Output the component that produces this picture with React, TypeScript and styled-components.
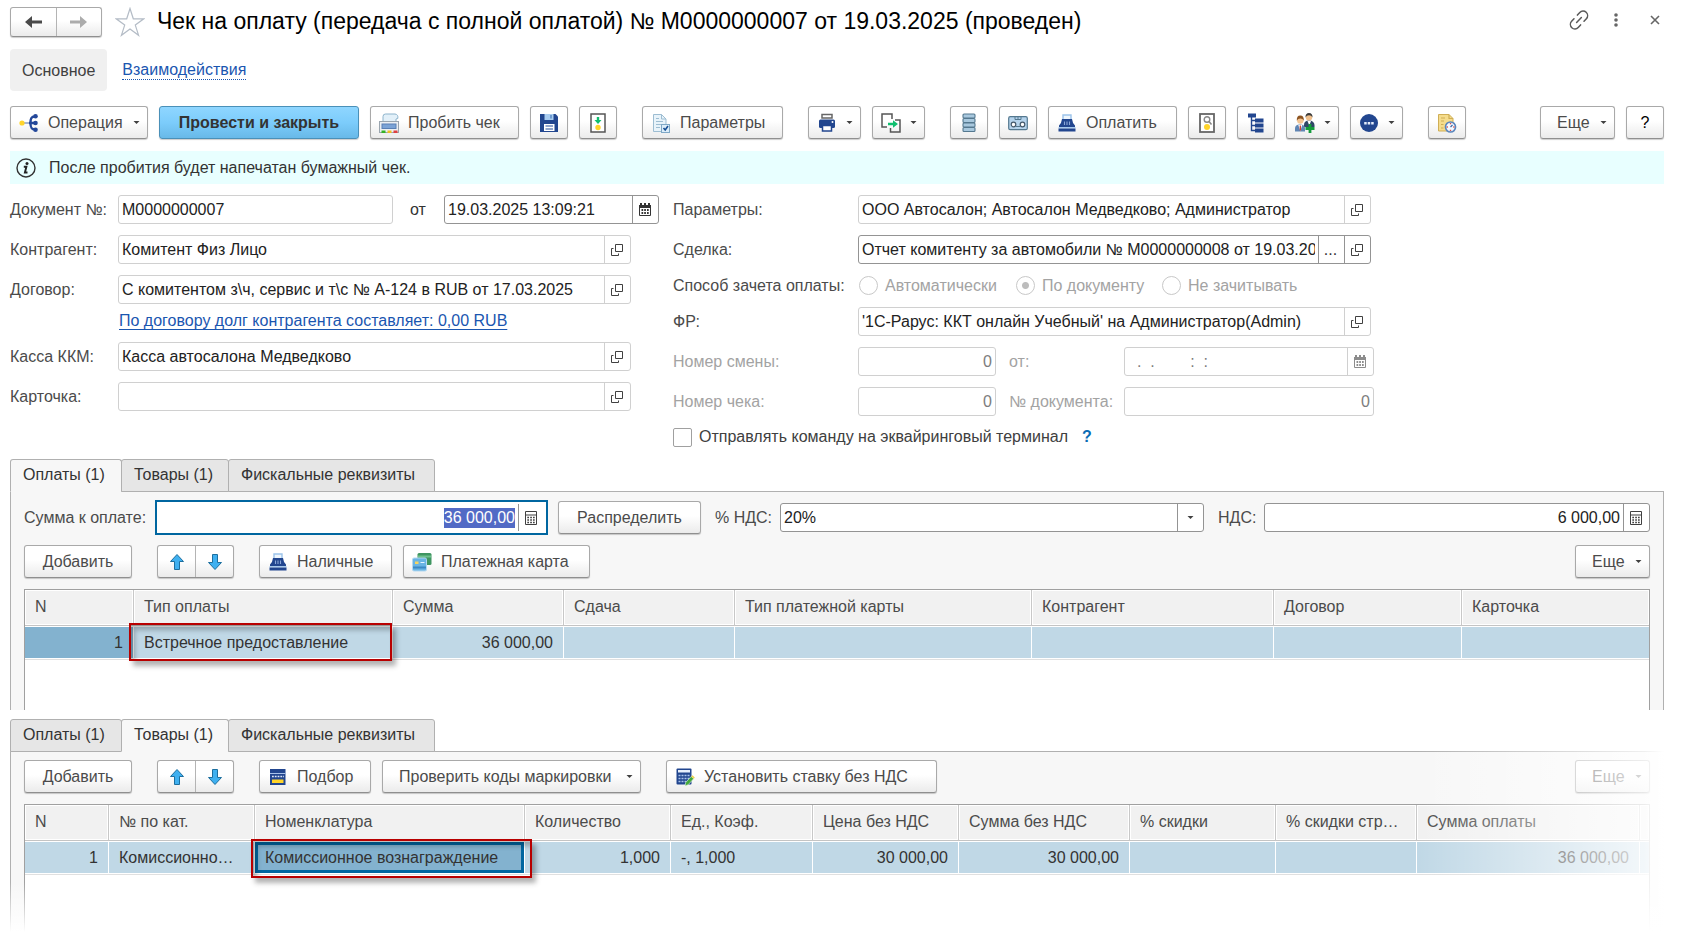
import React, { useEffect, useRef } from "react";
import styled, { createGlobalStyle, css } from "styled-components";

const GlobalStyle = createGlobalStyle`
  *, *::before, *::after { box-sizing: border-box; }
  body { margin: 0; background: #fff; }
  body, button, input, select, table { font: 16px/20px "Liberation Sans", Arial, sans-serif; color: #4b4b4b; }
`;

const Page = styled.div`
  display: flex;
  flex-direction: column;
  padding: 6px 17px 0 10px;
`;

/* ---------- title bar ---------- */

const TitleBar = styled.header`
  display: flex;
  align-items: center;
  height: 31px;
`;

const Title = styled.h1`
  flex: 1;
  margin: 0 0 0 12px;
  padding-bottom: 2px;
  font-size: 23px;
  line-height: 28px;
  font-weight: 400;
  color: #000;
  white-space: nowrap;
`;

const PlainButton = styled.button`
  display: flex;
  align-items: center;
  justify-content: center;
  padding: 0;
  border: 0;
  background: none;
`;

const FavoriteButton = styled(PlainButton)`
  margin-left: 13px;
`;

const WindowTools = styled.div`
  display: flex;
  align-items: center;
  gap: 18px;
  padding-bottom: 3px;
`;

const Sections = styled.nav`
  display: flex;
  align-items: center;
  gap: 15px;
  margin-top: 12px;
`;

const SectionCurrent = styled.a`
  padding: 12px 12px 10px;
  border-radius: 4px;
  background: #f0f0f0;
  color: #404040;
  text-decoration: none;
`;

const SectionLink = styled.a`
  line-height: 18px;
  color: #1a56b0;
  text-decoration: none;
  border-bottom: 1px dotted #1a56b0;
`;

/* ---------- buttons ---------- */

const raised = css`
  border: 1px solid #a9a9a9;
  border-bottom-color: #8f8f8f;
  border-radius: 3px;
  background: linear-gradient(#fff 0%, #fff 45%, #ebebeb 100%);
  box-shadow: 0 1px 1px rgba(0, 0, 0, 0.2);
`;

const ToolButton = styled.button<{ $w?: number; $icon?: boolean; $caret?: boolean; $primary?: boolean }>`
  ${raised}
  flex: none;
  display: flex;
  align-items: center;
  justify-content: ${(p) => (p.$icon || p.$caret ? "flex-start" : "center")};
  gap: 9px;
  height: 33px;
  min-width: ${(p) => p.$w ?? 0}px;
  padding: 0 ${(p) => (p.$caret ? 7 : 16)}px 0 ${(p) => (p.$icon ? 8 : 16)}px;
  white-space: nowrap;
  ${(p) =>
    p.$primary &&
    css`
      border-color: #4a90b8;
      background: linear-gradient(#8fd6ff 0%, #7cccfb 50%, #68b9e8 100%);
      color: #333;
      font-weight: 700;
    `}
`;

const CaretSvg = styled.svg`
  margin-left: auto;
`;

const IconButton = styled.button`
  ${raised}
  flex: none;
  display: flex;
  align-items: center;
  justify-content: center;
  width: 38px;
  height: 33px;
  padding: 0;
  color: #000;
`;

const Split = styled.div`
  ${raised}
  display: flex;
  height: 33px;
`;

const SplitPart = styled(PlainButton)`
  width: 37px;
  & + & {
    width: 38px;
    border-left: 1px solid #b4b4b4;
  }
`;

const NavSplit = styled(Split)`
  height: 30px;
  ${SplitPart} { width: 45px; }
`;

const Toolbar = styled.div`
  display: flex;
  align-items: center;
  gap: 11px;
`;

const MainToolbar = styled(Toolbar)`
  margin-top: 15px;
`;

const Gap = styled.span<{ $grow?: boolean }>`
  flex: ${(p) => (p.$grow ? "1 0 0" : "0 0 3px")};
`;

const InfoBar = styled.div`
  display: flex;
  align-items: center;
  gap: 13px;
  height: 33px;
  margin-top: 12px;
  padding-left: 6px;
  background: #e8ffff;
  color: #333;
`;

/* ---------- form ---------- */

const Form = styled.form`
  display: grid;
  grid-template-columns: minmax(0, 649px) minmax(0, 702px);
  gap: 14px;
  margin-top: 11px;
`;

const Column = styled.div`
  display: flex;
  flex-direction: column;
  gap: 11px;
`;

const Row = styled.div<{ $wide?: boolean }>`
  display: grid;
  grid-template-columns: ${(p) => (p.$wide ? 185 : 108)}px minmax(0, 1fr);
  align-items: center;
`;

const RowBody = styled.div`
  display: flex;
  align-items: center;
`;

const Label = styled.label<{ $off?: boolean }>`
  color: ${(p) => (p.$off ? "#a3a3a3" : "#4b4b4b")};
  white-space: nowrap;
`;

const FromLabel = styled(Label)`
  width: 51px;
  padding-left: 17px;
  color: #333;
`;

const InnerLabel = styled(Label)`
  width: 128px;
  padding-left: 13px;
`;

const Field = styled.div<{ $w?: number; $strong?: boolean }>`
  display: flex;
  flex: ${(p) => (p.$w ? `0 1 ${p.$w}px` : "1 1 0")};
  min-width: 0;
  width: ${(p) => (p.$w ? `${p.$w}px` : "auto")};
  height: 29px;
  border: 1px solid ${(p) => (p.$strong ? "#949494" : "#d0d0d0")};
  border-radius: 3px;
  background: #fff;
`;

const FieldInput = styled.input<{ $right?: boolean }>`
  flex: 1;
  min-width: 0;
  padding: 0 3px;
  border: 0;
  outline: 0;
  background: none;
  color: #222;
  text-align: ${(p) => (p.$right ? "right" : "left")};
  &:disabled { color: #7d7d7d; }
`;

const FieldButton = styled(PlainButton)<{ $strong?: boolean }>`
  flex: none;
  width: 26px;
  padding-right: 2px;
  border-left: 1px solid ${(p) => (p.$strong ? "#949494" : "#d0d0d0")};
  color: #333;
  &:disabled { color: #8c8c8c; }
`;

const FocusField = styled(Field)`
  height: 35px;
  padding: 2px 2px 2px 0;
  border: 2px solid #0066a0;
  border-radius: 0;
  ${FieldInput}::selection {
    background: rgba(80, 104, 196, 0.99);
    color: #fff;
  }
`;

const VatSelect = styled.select`
  flex: 1;
  min-width: 0;
  padding: 0 3px;
  border: 0;
  background: none;
  appearance: none;
  color: #222;
`;

const SelectArrow = styled.span`
  display: flex;
  align-items: center;
  width: 26px;
  padding-right: 9px;
  border-left: 1px solid #949494;
  pointer-events: none;
`;

const DebtLink = styled.a`
  display: block;
  margin: 6px 0 0 109px;
  line-height: 21px;
  color: #1a56b0;
  text-underline-offset: 3px;
`;

const Radios = styled.div`
  display: grid;
  grid-template-columns: 157px 146px auto;
  align-items: center;
  height: 21px;
  padding-left: 1px;
`;

const Choice = styled.label<{ $off?: boolean }>`
  display: flex;
  align-items: center;
  gap: 7px;
  color: ${(p) => (p.$off ? "#a3a3a3" : "#404040")};
  white-space: nowrap;
`;

const Radio = styled.input`
  appearance: none;
  width: 19px;
  height: 19px;
  margin: 0;
  border: 1px solid #c8c8c8;
  border-radius: 50%;
  background: #fff;
  &:checked { background: radial-gradient(circle, #bdbdbd 0 3px, #fff 4px); }
`;

const Check = styled.input`
  appearance: none;
  width: 19px;
  height: 19px;
  margin: 0;
  border: 1px solid #a0a0a0;
  border-radius: 2px;
  background: #fff;
`;

const HelpLink = styled.a`
  margin-left: 14px;
  color: #0a6cb4;
  font-weight: 700;
  text-decoration: none;
`;

/* ---------- tabs and panels ---------- */

const TabSet = styled.section`
  position: relative;
  margin-top: 9px;
`;

const FirstTabSet = styled(TabSet)`
  margin-top: 12px;
`;

const Tabs = styled.div`
  display: flex;
`;

const Tab = styled.button<{ $w: number; $on?: boolean }>`
  position: relative;
  height: 33px;
  min-width: ${(p) => p.$w}px;
  margin-bottom: -1px;
  padding: 0 12px 1px;
  border: 1px solid #b0b0b0;
  border-bottom-color: ${(p) => (p.$on ? "#f7f7f7" : "#b0b0b0")};
  border-radius: 3px 3px 0 0;
  background: ${(p) => (p.$on ? "#f7f7f7" : "#e6e6e6")};
  color: #333;
  text-align: left;
  white-space: nowrap;
  & + & { margin-left: -1px; }
`;

const Panel = styled.div`
  display: flex;
  flex-direction: column;
  padding: 8px 13px 0;
  border: 1px solid #b0b0b0;
  border-bottom: 0;
  background: #f7f7f7;
`;

const PayRow = styled.div`
  display: flex;
  align-items: center;
  margin-bottom: 10px;
`;

const PayLabel = styled(Label)<{ $w: number; $pad?: number }>`
  flex: none;
  width: ${(p) => p.$w}px;
  padding-left: ${(p) => p.$pad ?? 0}px;
`;

const PayButton = styled(ToolButton)`
  margin-left: 10px;
`;

const Sheet = styled.div`
  height: 121px;
  margin-top: 11px;
  border: 1px solid #a0a0a0;
  border-bottom: 0;
  background: #fff;
`;

const TallSheet = styled(Sheet)`
  height: 128px;
`;

const Grid = styled.table`
  width: 100%;
  table-layout: fixed;
  border-spacing: 0;
`;

const Th = styled.th`
  height: 36px;
  padding: 0 10px 2px;
  border-right: 1px solid #c8c8c8;
  border-bottom: 1px solid #c4c4c4;
  background: #f1f1f1;
  box-shadow: inset 0 0 0 1px #fff;
  font-weight: 400;
  text-align: left;
  white-space: nowrap;
  &:last-child { border-right: 0; }
`;

const Td = styled.td<{ $right?: boolean; $dark?: boolean; $edit?: boolean }>`
  position: relative;
  height: 33px;
  padding: 0 10px;
  border: 1px solid #fff;
  border-left: 0;
  background: ${(p) => (p.$dark || p.$edit ? "#83b2cf" : "#c0d8e6")};
  box-shadow: 0 1px #e0e0e0${(p) => (p.$edit ? ", inset 0 0 0 3px #0066a0" : "")};
  color: #333;
  text-align: ${(p) => (p.$right ? "right" : "left")};
  white-space: nowrap;
  &:last-child { border-right: 0; }
`;

const Callout = styled.span<{ $loose?: boolean }>`
  position: absolute;
  z-index: 1;
  inset: ${(p) => (p.$loose ? "-3px -8px -5px -4px" : "-4px 0 -3px -5px")};
  border: 2px solid #b80000;
  box-shadow: 4px 5px 5px rgba(0, 0, 0, 0.3), inset 4px 5px 5px rgba(0, 0, 0, 0.25);
  pointer-events: none;
`;

const FadeRight = styled.div`
  position: absolute;
  z-index: 2;
  inset: 0 0 0 auto;
  width: 247px;
  background: linear-gradient(to right, rgba(255, 255, 255, 0), rgba(255, 255, 255, 0.8) 92%, #fff);
  pointer-events: none;
`;

const FadeBottom = styled.div`
  position: absolute;
  z-index: 2;
  inset: auto 0 0 0;
  height: 50px;
  background: linear-gradient(rgba(255, 255, 255, 0), #fff);
  pointer-events: none;
`;

/* ---------- icons ---------- */

type SvgProps = { w?: number; h?: number; children: React.ReactNode };
const Svg = ({ w = 20, h = 20, children }: SvgProps) => (
  <svg width={w} height={h} viewBox={`0 0 ${w} ${h}`} fill="none" aria-hidden="true">
    {children}
  </svg>
);

const Caret = () => (
  <CaretSvg width={7} height={5} viewBox="0 0 7 5" aria-hidden="true">
    <path d="M.5 1h6L3.500 4z" fill="#404040" />
  </CaretSvg>
);

const BackIcon = () => (
  <Svg w={18} h={12}>
    <path d="M0 6l7-6v4.500h10v3H7V12z" fill="#4a4a4a" />
  </Svg>
);
const ForwardIcon = () => (
  <Svg w={18} h={12}>
    <path d="M17 6l-7-6v4.500H0v3h10V12z" fill="#acacac" />
  </Svg>
);
const StarIcon = () => (
  <Svg w={30} h={30}>
    <path d="M15 1.500l3.300 10.300h10.500l-8.500 6.300 3.300 10.200L15 22l-8.600 6.300 3.300-10.200-8.500-6.300h10.500z" stroke="#b4bcc6" strokeWidth="1.200" />
  </Svg>
);
const ChainIcon = () => (
  <Svg w={22} h={22}>
    <g transform="rotate(-47 11 11)" stroke="#5a5a5a" strokeWidth="1.500" strokeLinecap="round">
      <path d="M8.500 15.500H5a4.500 4.500 0 0 1 0-9h3.500M13.500 6.500H17a4.500 4.500 0 0 1 0 9h-3.500M7.500 11h7" />
    </g>
  </Svg>
);
const DotsIcon = () => (
  <Svg w={16} h={16}>
    <circle cx="8" cy="3" r="1.800" fill="#666" />
    <circle cx="8" cy="8" r="1.800" fill="#666" />
    <circle cx="8" cy="13" r="1.800" fill="#666" />
  </Svg>
);
const CloseIcon = () => (
  <Svg w={22} h={10}>
    <path d="M9 1l8 8M17 1L9 9" stroke="#666" strokeWidth="1.600" />
  </Svg>
);
const InfoIcon = () => (
  <Svg w={20} h={20}>
    <circle cx="10" cy="10" r="9" stroke="#333" strokeWidth="1.400" />
    <circle cx="11" cy="5.500" r="1.500" fill="#222" />
    <path d="M7.800 8.800h2.600l-1.500 5.700h2.600" stroke="#222" strokeWidth="1.900" />
  </Svg>
);
const OperationIcon = () => (
  <Svg>
    <path d="M4 10h6" stroke="#8a9cc0" strokeWidth="1.500" />
    <path d="M16 3.500c-4 0-4.500 2.500-4.500 6.500s.5 6.500 4.500 6.500M10 10h6" stroke="#24489a" strokeWidth="2.400" />
    <circle cx="3" cy="10" r="2.600" fill="#ffd42a" />
    <circle cx="16.500" cy="3.200" r="2.300" fill="#24489a" />
    <circle cx="16.500" cy="10" r="2.300" fill="#24489a" />
    <circle cx="16.500" cy="16.800" r="2.300" fill="#24489a" />
  </Svg>
);
const FiscalIcon = () => (
  <Svg>
    <path d="M4 9V3.500Q4 1 6.500 1H16q3.500.5 2.800 4.500l-1.800.5v3z" fill="#e2f0f9" stroke="#8db3cc" />
    <rect x="0.500" y="8.500" width="19" height="11" fill="#eceff2" stroke="#9aa5af" />
    <rect x="3" y="11" width="14" height="4.500" fill="#7ba3d6" stroke="#5a80b5" />
    <rect x="2.500" y="17.500" width="4" height="2.500" fill="#35b324" />
    <rect x="8.500" y="17.500" width="4" height="2.500" fill="#f0c020" />
    <rect x="14.500" y="17.500" width="4" height="2.500" fill="#e04040" />
  </Svg>
);
const SaveIcon = () => (
  <Svg>
    <path d="M1 1h15.500L19 3.500V19H1z" fill="#22468f" />
    <rect x="5.500" y="1" width="9" height="6" fill="#a9cdf0" />
    <rect x="11" y="2" width="2" height="3.500" fill="#6f9bd0" />
    <rect x="5" y="11" width="10.500" height="7" fill="#fff" />
    <path d="M6.500 13h7.500M6.500 16h7.500" stroke="#6c88bd" strokeWidth="1.300" />
  </Svg>
);
const PostIcon = () => (
  <Svg>
    <rect x="3" y="1" width="14" height="18" fill="#fff" stroke="#555" strokeWidth="1.500" />
    <path d="M8.800 4h2.400v3h2.300L10 11 6.500 7h2.300z" fill="#0fbf6f" />
    <circle cx="10" cy="14.500" r="2.700" fill="#ffd42a" />
  </Svg>
);
const ParamsIcon = () => (
  <Svg>
    <path d="M2.500 1.500h8l4.500 4.500v12.500h-12.500z" fill="#e8f3fa" stroke="#9dbdd2" />
    <path d="M10.500 1.500v4.500h4.500M5 8.500h7M5 11.500h5M5 14.500h4M5 5.500h3" stroke="#9dbdd2" />
    <rect x="10.500" y="11.500" width="8" height="8" fill="#dcedf9" stroke="#7fa8c6" />
    <path d="M12.500 15l1.700 2 2.800-4" stroke="#174f94" strokeWidth="1.600" />
  </Svg>
);
const PrinterIcon = () => (
  <Svg>
    <path d="M5 5V1.500h10V5z" fill="#fff" stroke="#666" strokeWidth="1.500" />
    <rect x="2" y="6.500" width="16" height="8.500" rx="1.500" fill="#22468f" />
    <circle cx="15.500" cy="9" r="1" fill="#fff" />
    <rect x="5.500" y="12.500" width="9" height="5.500" fill="#fff" stroke="#22468f" strokeWidth="1.500" />
  </Svg>
);
const BasedOnIcon = () => (
  <Svg>
    <path d="M6 14H1V1h10v5" stroke="#555" strokeWidth="1.500" />
    <path d="M9.500 15v4H19V7h-5" stroke="#555" strokeWidth="1.500" />
    <path d="M7 9.700h5V7.200l5 3.800-5 3.800v-2.500H7z" fill="#0fbf6f" />
  </Svg>
);
const RegisterIcon = () => (
  <Svg>
    {[1, 5.500, 10, 14.500].map((y) => (
      <rect key={y} x="4" y={y} width="12" height="4" rx="1" fill="#a8c8de" stroke="#54788f" strokeWidth="1.100" />
    ))}
  </Svg>
);
const CassetteIcon = () => (
  <Svg>
    <rect x="0.700" y="3.700" width="18.600" height="13" rx="1.500" fill="#b5d3ec" stroke="#54788f" strokeWidth="1.200" />
    <path d="M7 4v2.500h6V4M10 4v2" stroke="#54788f" />
    <circle cx="5.500" cy="11.500" r="2.300" fill="#fff" stroke="#44586a" strokeWidth="1.200" />
    <circle cx="14.500" cy="11.500" r="2.300" fill="#fff" stroke="#44586a" strokeWidth="1.200" />
    <path d="M8 13.500h4" stroke="#54788f" />
  </Svg>
);
const CashIcon = () => (
  <Svg>
    <path d="M6 6V2h8v4" fill="#eef6fd" stroke="#9cc3ea" strokeWidth="1.400" />
    <path d="M5 6h10q.5 4.500 3 6.500v2H2v-2Q4.500 10.500 5 6z" fill="#22468f" />
    <path d="M7.500 8.500V12M10 8.500V12M12.500 8.500V12" stroke="#8ba7d8" strokeWidth="1.100" />
    <rect x="1.500" y="14" width="17" height="1.500" fill="#a8cbee" />
    <rect x="1.500" y="15.500" width="17" height="3" fill="#22468f" />
  </Svg>
);
const PreviewIcon = () => (
  <Svg>
    <rect x="3" y="1" width="14" height="18" fill="#fff" stroke="#666" strokeWidth="1.800" />
    <circle cx="10" cy="6.500" r="2.800" stroke="#888" strokeWidth="1.400" />
    <path d="M12 8.500l2.500 3" stroke="#888" strokeWidth="1.500" />
    <circle cx="10" cy="14" r="3" fill="#ffd42a" />
  </Svg>
);
const TreeIcon = () => (
  <Svg>
    <path d="M5.500 3v14.500H10M5.500 7.500H10M5.500 12.500H10" stroke="#22468f" strokeWidth="1.400" />
    <rect x="2" y="0.500" width="8" height="4" fill="#22468f" />
    <rect x="9" y="5.500" width="8.500" height="4" fill="#22468f" />
    <rect x="9" y="10.500" width="8.500" height="4" fill="#22468f" />
    <rect x="9" y="15.500" width="8.500" height="4" fill="#22468f" />
  </Svg>
);
const PeopleIcon = () => (
  <Svg>
    <path d="M9 14v-2q0-4.500 5-4.500t5.500 4.500v2z" fill="#2f4667" />
    <path d="M12.500 8h3.500l-1.700 4.500z" fill="#fff" />
    <circle cx="14" cy="4.200" r="3.200" fill="#f0c08c" />
    <path d="M10.500 4.500Q10.300 0 14 0t3.500 4.500Q16.500 2.300 14 2.300T10.500 4.500z" fill="#3b3b3b" />
    <path d="M0 18.500v-3q0-4 5-4t5 4v3z" fill="#5f86b4" />
    <path d="M3.300 12h4L5.300 18z" fill="#fff" />
    <path d="M5.300 12.500v5" stroke="#cf3a2a" strokeWidth="1.300" />
    <circle cx="5.300" cy="7.500" r="3.200" fill="#f2c493" />
    <path d="M1.800 7.800Q1.500 2.500 5.300 2.500t3.500 5.300Q7.800 5.500 5.300 5.500T1.800 7.800z" fill="#8d5420" />
    <path d="M15 11v9M10.500 15.500h9" stroke="#149c3c" strokeWidth="2.800" />
  </Svg>
);
const MoreIcon = () => (
  <Svg>
    <circle cx="10" cy="10" r="9" fill="#22468f" />
    <path d="M5.200 9h2.500v2.500H5.200zM8.700 9h2.500v2.500H8.700zM12.200 9h2.500v2.500h-2.500z" fill="#e6eefb" />
  </Svg>
);
const HistoryIcon = () => (
  <Svg>
    <path d="M1.500 1.500h10.500l4 4v12.500H1.500z" fill="#f5dc8c" stroke="#cfae55" />
    <path d="M12 1.500v4h4M4 8h3M4 11.500h2.500M4 15h2.500M4 5h4" stroke="#cfae55" strokeWidth="1.200" />
    <circle cx="13.500" cy="14" r="5" fill="#f4f9ff" stroke="#5b86bd" strokeWidth="1.700" />
    <path d="M13.500 14l2-2" stroke="#3e6aa5" strokeWidth="1.200" />
    <path d="M13.500 10v1.300M13.500 16.700V18M9.600 14h1.300M16.200 14h1.300" stroke="#d65050" strokeWidth="1.400" />
  </Svg>
);
const OpenIcon = () => (
  <Svg w={12} h={12}>
    <path d="M4.500 0.500h7v7h-7z" stroke="#404040" />
    <path d="M2.500 4.500h-2v7h7v-2" stroke="#404040" />
  </Svg>
);
const CalendarIcon = () => (
  <Svg w={12} h={13}>
    <path d="M0 2h1V0h2v2h2V0h2v2h2V0h2v2h1v3H0z" fill="currentColor" />
    <path d="M.5 4v8.500h11V4" stroke="currentColor" />
    <path d="M2.500 7h1.700M5.200 7h1.700M8 7h1.700M2.500 10h1.700M5.200 10h1.700M8 10h1.700" stroke="currentColor" strokeWidth="1.800" />
  </Svg>
);
const CalcIcon = () => (
  <Svg w={12} h={14}>
    <path d="M.5.500h11v13H.5zM.5 4h11" stroke="#404040" />
    <path d="M2.300 6.500h1.700M5.200 6.500h1.700M8 6.500h1.700M2.300 9h1.700M5.200 9h1.700M8 9h1.700M2.300 11.500h1.700M5.200 11.500h1.700M8 11.500h1.700" stroke="#404040" strokeWidth="1.400" />
  </Svg>
);
const UpIcon = () => (
  <Svg w={16} h={18}>
    <path d="M8 1.500l6.500 7h-4v8h-5v-8h-4z" fill="#3fb0f0" stroke="#1d6f9f" strokeLinejoin="round" />
  </Svg>
);
const DownIcon = () => (
  <Svg w={16} h={18}>
    <path d="M8 16.500l6.500-7h-4v-8h-5v8h-4z" fill="#3fb0f0" stroke="#1d6f9f" strokeLinejoin="round" />
  </Svg>
);
const CardIcon = () => (
  <Svg>
    <rect x="5.500" y="1" width="14" height="12" rx="1.500" fill="#3f9561" />
    <path d="M6 4.500h13" stroke="#6fc08e" strokeWidth="2" />
    <rect x="0.500" y="6" width="14" height="13" rx="1.500" fill="#69b4e4" stroke="#b4d8f0" />
    <path d="M1 15.500h13" stroke="#3b88c4" strokeWidth="2" />
    <rect x="3" y="9.500" width="3.500" height="2.500" fill="#f6d460" />
    <path d="M8.500 10.500h4" stroke="#e6f4ff" />
  </Svg>
);
const PickIcon = () => (
  <Svg>
    <rect x="2" y="2" width="15.500" height="16" fill="#22468f" />
    <path d="M2 6.500h15.500" stroke="#a9c2ea" />
    <path d="M4 9.500h12" stroke="#dfe8f8" strokeWidth="1.600" strokeDasharray="1.800 1" />
    <rect x="4" y="12.500" width="11.500" height="3.500" fill="#ffd42a" />
  </Svg>
);
const RateIcon = () => (
  <Svg>
    <rect x="1.500" y="1.500" width="15" height="16" rx="1" fill="#22468f" />
    <rect x="3" y="3" width="12" height="2.500" fill="#e6effc" />
    <path d="M3.500 8.500h11M3.500 11.500h11M3.500 14.500h8" stroke="#a9c2ea" strokeWidth="1.600" strokeDasharray="2 1" />
    <path d="M10 19l.7-3.500 5.500-6 2.500 2.200-5.500 6z" fill="#43a83b" stroke="#e8f6e6" strokeWidth="0.600" />
    <path d="M16.200 9.500l1.200-1.300 2.400 2.300-1.100 1.200z" fill="#f0cf4a" />
  </Svg>
);

/* ---------- composed parts ---------- */

type FieldProps = {
  id: string;
  value: string;
  w?: number;
  strong?: boolean;
  right?: boolean;
  disabled?: boolean;
  more?: boolean;
  button?: "open" | "calendar" | "calc";
};

const buttonIcons = { open: <OpenIcon />, calendar: <CalendarIcon />, calc: <CalcIcon /> };
const buttonNames = { open: "Открыть", calendar: "Выбрать дату", calc: "Калькулятор" };

const TextField = ({ id, value, w, strong, right, disabled, more, button }: FieldProps) => (
  <Field $w={w} $strong={strong}>
    <FieldInput id={id} defaultValue={value} $right={right} disabled={disabled} />
    {more && (
      <FieldButton type="button" $strong={strong} aria-label="Выбрать">
        ...
      </FieldButton>
    )}
    {button && (
      <FieldButton type="button" $strong={strong} disabled={disabled} aria-label={buttonNames[button]}>
        {buttonIcons[button]}
      </FieldButton>
    )}
  </Field>
);

const AmountField = () => {
  const input = useRef<HTMLInputElement>(null);
  useEffect(() => {
    input.current?.focus({ preventScroll: true });
    input.current?.select();
  }, []);
  return (
    <FocusField $w={393}>
      <FieldInput id="amount" ref={input} defaultValue="36 000,00" $right />
      <FieldButton type="button" $strong aria-label="Калькулятор">
        <CalcIcon />
      </FieldButton>
    </FocusField>
  );
};

const DropButton = ({ label, icon }: { label: string; icon: React.ReactNode }) => (
  <ToolButton type="button" $w={53} $icon $caret aria-label={label}>
    {icon}
    <Caret />
  </ToolButton>
);

const MoreButton = () => (
  <ToolButton type="button" $w={75} $caret>
    Еще
    <Caret />
  </ToolButton>
);

const MoveButtons = () => (
  <Split>
    <SplitPart type="button" aria-label="Переместить вверх">
      <UpIcon />
    </SplitPart>
    <SplitPart type="button" aria-label="Переместить вниз">
      <DownIcon />
    </SplitPart>
  </Split>
);

const tabs = [
  { name: "Оплаты (1)", width: 112 },
  { name: "Товары (1)", width: 108 },
  { name: "Фискальные реквизиты", width: 207 },
];

const TabBar = ({ active }: { active: number }) => (
  <Tabs role="tablist">
    {tabs.map((t, i) => (
      <Tab key={t.name} type="button" role="tab" aria-selected={i === active} $w={t.width} $on={i === active}>
        {t.name}
      </Tab>
    ))}
  </Tabs>
);

type Col = {
  title: string;
  width: number;
  value?: string;
  right?: boolean;
  dark?: boolean;
  edit?: boolean;
  callout?: boolean;
};

const DataTable = ({ columns }: { columns: Col[] }) => (
  <Grid>
    <colgroup>
      {columns.map((c) => (
        <col key={c.title} width={c.width} />
      ))}
    </colgroup>
    <thead>
      <tr>
        {columns.map((c) => (
          <Th key={c.title} scope="col">
            {c.title}
          </Th>
        ))}
      </tr>
    </thead>
    <tbody>
      <tr>
        {columns.map((c) => (
          <Td key={c.title} $right={c.right} $dark={c.dark} $edit={c.edit}>
            {c.value}
            {c.callout && <Callout $loose={c.edit} />}
          </Td>
        ))}
      </tr>
    </tbody>
  </Grid>
);

const payments: Col[] = [
  { title: "N", width: 109, value: "1", right: true, dark: true },
  { title: "Тип оплаты", width: 259, value: "Встречное предоставление", callout: true },
  { title: "Сумма", width: 171, value: "36 000,00", right: true },
  { title: "Сдача", width: 171 },
  { title: "Тип платежной карты", width: 297 },
  { title: "Контрагент", width: 242 },
  { title: "Договор", width: 188 },
  { title: "Карточка", width: 187 },
];

const goods: Col[] = [
  { title: "N", width: 84, value: "1", right: true },
  { title: "№ по кат.", width: 146, value: "Комиссионно…" },
  { title: "Номенклатура", width: 270, value: "Комиссионное вознаграждение", edit: true, callout: true },
  { title: "Количество", width: 146, value: "1,000", right: true },
  { title: "Ед., Коэф.", width: 142, value: "-, 1,000" },
  { title: "Цена без НДС", width: 146, value: "30 000,00", right: true },
  { title: "Сумма без НДС", width: 171, value: "30 000,00", right: true },
  { title: "% скидки", width: 146 },
  { title: "% скидки стр…", width: 141 },
  { title: "Сумма оплаты", width: 223, value: "36 000,00", right: true },
  { title: "", width: 9 },
];

export default function App() {
  return (
    <>
      <GlobalStyle />
      <Page>
        <TitleBar>
          <NavSplit>
            <SplitPart type="button" aria-label="Назад">
              <BackIcon />
            </SplitPart>
            <SplitPart type="button" aria-label="Вперед">
              <ForwardIcon />
            </SplitPart>
          </NavSplit>
          <FavoriteButton type="button" aria-label="В избранное">
            <StarIcon />
          </FavoriteButton>
          <Title>Чек на оплату (передача с полной оплатой) № М0000000007 от 19.03.2025 (проведен)</Title>
          <WindowTools>
            <PlainButton type="button" aria-label="Получить ссылку">
              <ChainIcon />
            </PlainButton>
            <PlainButton type="button" aria-label="Меню окна">
              <DotsIcon />
            </PlainButton>
            <PlainButton type="button" aria-label="Закрыть">
              <CloseIcon />
            </PlainButton>
          </WindowTools>
        </TitleBar>

        <Sections>
          <SectionCurrent href="#main">Основное</SectionCurrent>
          <SectionLink href="#interactions">Взаимодействия</SectionLink>
        </Sections>

        <MainToolbar role="toolbar">
          <ToolButton type="button" $w={138} $icon $caret>
            <OperationIcon />
            Операция
            <Caret />
          </ToolButton>
          <ToolButton type="button" $w={200} $primary>
            Провести и закрыть
          </ToolButton>
          <ToolButton type="button" $w={149} $icon>
            <FiscalIcon />
            Пробить чек
          </ToolButton>
          <IconButton type="button" aria-label="Записать">
            <SaveIcon />
          </IconButton>
          <IconButton type="button" aria-label="Провести">
            <PostIcon />
          </IconButton>
          <Gap />
          <ToolButton type="button" $w={141} $icon>
            <ParamsIcon />
            Параметры
          </ToolButton>
          <Gap />
          <DropButton label="Печать" icon={<PrinterIcon />} />
          <DropButton label="Создать на основании" icon={<BasedOnIcon />} />
          <Gap />
          <IconButton type="button" aria-label="Движения документа">
            <RegisterIcon />
          </IconButton>
          <IconButton type="button" aria-label="Записи">
            <CassetteIcon />
          </IconButton>
          <ToolButton type="button" $w={129} $icon>
            <CashIcon />
            Оплатить
          </ToolButton>
          <IconButton type="button" aria-label="Просмотр">
            <PreviewIcon />
          </IconButton>
          <IconButton type="button" aria-label="Структура подчиненности">
            <TreeIcon />
          </IconButton>
          <DropButton label="Контакты" icon={<PeopleIcon />} />
          <DropButton label="Дополнительно" icon={<MoreIcon />} />
          <Gap />
          <IconButton type="button" aria-label="История">
            <HistoryIcon />
          </IconButton>
          <Gap $grow />
          <MoreButton />
          <IconButton type="button">?</IconButton>
        </MainToolbar>

        <InfoBar>
          <InfoIcon />
          <span>После пробития будет напечатан бумажный чек.</span>
        </InfoBar>

        <Form onSubmit={(e) => e.preventDefault()}>
          <Column>
            <Row>
              <Label htmlFor="number">Документ №:</Label>
              <RowBody>
                <TextField id="number" value="М0000000007" />
                <FromLabel htmlFor="date">от</FromLabel>
                <TextField id="date" value="19.03.2025 13:09:21" w={215} strong button="calendar" />
              </RowBody>
            </Row>
            <Row>
              <Label htmlFor="partner">Контрагент:</Label>
              <TextField id="partner" value="Комитент Физ Лицо" w={513} button="open" />
            </Row>
            <div>
              <Row>
                <Label htmlFor="contract">Договор:</Label>
                <TextField
                  id="contract"
                  value="С комитентом з\ч, сервис и т\с № А-124 в RUB от 17.03.2025"
                  w={513}
                  button="open"
                />
              </Row>
              <DebtLink href="#debt">По договору долг контрагента составляет: 0,00 RUB</DebtLink>
            </div>
            <Row>
              <Label htmlFor="till">Касса ККМ:</Label>
              <TextField id="till" value="Касса автосалона Медведково" w={513} button="open" />
            </Row>
            <Row>
              <Label htmlFor="card">Карточка:</Label>
              <TextField id="card" value="" w={513} button="open" />
            </Row>
          </Column>

          <Column>
            <Row $wide>
              <Label htmlFor="params">Параметры:</Label>
              <TextField
                id="params"
                value="ООО Автосалон; Автосалон Медведково; Администратор"
                w={513}
                button="open"
              />
            </Row>
            <Row $wide>
              <Label htmlFor="deal">Сделка:</Label>
              <TextField
                id="deal"
                value="Отчет комитенту за автомобили № М0000000008 от 19.03.2025"
                w={513}
                strong
                more
                button="open"
              />
            </Row>
            <Row $wide role="radiogroup" aria-labelledby="offset-label">
              <span id="offset-label">Способ зачета оплаты:</span>
              <Radios>
                <Choice $off>
                  <Radio type="radio" name="offset" disabled />
                  Автоматически
                </Choice>
                <Choice $off>
                  <Radio type="radio" name="offset" defaultChecked disabled />
                  По документу
                </Choice>
                <Choice $off>
                  <Radio type="radio" name="offset" disabled />
                  Не зачитывать
                </Choice>
              </Radios>
            </Row>
            <Row $wide>
              <Label htmlFor="fiscal">ФР:</Label>
              <TextField
                id="fiscal"
                value="'1С-Рарус: ККТ онлайн Учебный' на Администратор(Admin)"
                w={513}
                button="open"
              />
            </Row>
            <Row $wide>
              <Label htmlFor="shift" $off>
                Номер смены:
              </Label>
              <RowBody>
                <TextField id="shift" value="0" w={138} right disabled />
                <InnerLabel htmlFor="shift-date" $off>
                  от:
                </InnerLabel>
                <TextField id="shift-date" value="  .  .        :  :" w={250} disabled button="calendar" />
              </RowBody>
            </Row>
            <Row $wide>
              <Label htmlFor="receipt" $off>
                Номер чека:
              </Label>
              <RowBody>
                <TextField id="receipt" value="0" w={138} right disabled />
                <InnerLabel htmlFor="doc" $off>
                  № документа:
                </InnerLabel>
                <TextField id="doc" value="0" w={250} right disabled />
              </RowBody>
            </Row>
            <RowBody>
              <Choice>
                <Check type="checkbox" />
                Отправлять команду на эквайринговый терминал
              </Choice>
              <HelpLink href="#help">?</HelpLink>
            </RowBody>
          </Column>
        </Form>

        <FirstTabSet>
          <TabBar active={0} />
          <Panel role="tabpanel">
            <PayRow>
              <PayLabel htmlFor="amount" $w={131}>
                Сумма к оплате:
              </PayLabel>
              <AmountField />
              <PayButton type="button" $w={143}>
                Распределить
              </PayButton>
              <PayLabel htmlFor="vat-rate" $w={79} $pad={14}>
                % НДС:
              </PayLabel>
              <Field $strong $w={424}>
                <VatSelect id="vat-rate" defaultValue="20">
                  <option value="20">20%</option>
                </VatSelect>
                <SelectArrow>
                  <Caret />
                </SelectArrow>
              </Field>
              <PayLabel htmlFor="vat" $w={60} $pad={14}>
                НДС:
              </PayLabel>
              <TextField id="vat" value="6 000,00" strong right button="calc" />
            </PayRow>
            <Toolbar role="toolbar">
              <ToolButton type="button" $w={108}>
                Добавить
              </ToolButton>
              <Gap />
              <MoveButtons />
              <Gap />
              <ToolButton type="button" $w={133} $icon>
                <CashIcon />
                Наличные
              </ToolButton>
              <ToolButton type="button" $w={187} $icon>
                <CardIcon />
                Платежная карта
              </ToolButton>
              <Gap $grow />
              <MoreButton />
            </Toolbar>
            <Sheet>
              <DataTable columns={payments} />
            </Sheet>
          </Panel>
        </FirstTabSet>

        <TabSet>
          <TabBar active={1} />
          <Panel role="tabpanel">
            <Toolbar role="toolbar">
              <ToolButton type="button" $w={108}>
                Добавить
              </ToolButton>
              <Gap />
              <MoveButtons />
              <Gap />
              <ToolButton type="button" $w={112} $icon>
                <PickIcon />
                Подбор
              </ToolButton>
              <ToolButton type="button" $w={259} $caret>
                Проверить коды маркировки
                <Caret />
              </ToolButton>
              <Gap />
              <ToolButton type="button" $w={271} $icon>
                <RateIcon />
                Установить ставку без НДС
              </ToolButton>
              <Gap $grow />
              <MoreButton />
            </Toolbar>
            <TallSheet>
              <DataTable columns={goods} />
            </TallSheet>
          </Panel>
          <FadeRight />
          <FadeBottom />
        </TabSet>
      </Page>
    </>
  );
}
